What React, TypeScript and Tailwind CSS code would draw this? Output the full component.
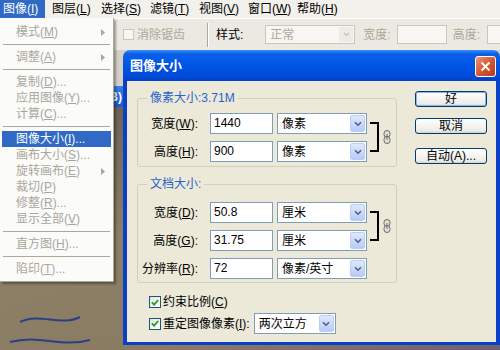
import { ReactNode } from "react";

function U({ c }: { c: string }) {
    return <span className="underline underline-offset-[1px]">{c}</span>
}

const menuBarItems = [
    { t: "图像", k: "I" },
    { t: "图层", k: "L" },
    { t: "选择", k: "S" },
    { t: "滤镜", k: "T" },
    { t: "视图", k: "V" },
    { t: "窗口", k: "W" },
    { t: "帮助", k: "H" },
]

type MenuEntry = { sep: true } | { t: string; k: string; dots?: boolean; sub?: boolean; active?: boolean }

const imageMenu: MenuEntry[] = [
    { t: "模式", k: "M", sub: true },
    { sep: true },
    { t: "调整", k: "A", sub: true },
    { sep: true },
    { t: "复制", k: "D", dots: true },
    { t: "应用图像", k: "Y", dots: true },
    { t: "计算", k: "C", dots: true },
    { sep: true },
    { t: "图像大小", k: "I", dots: true, active: true },
    { t: "画布大小", k: "S", dots: true },
    { t: "旋转画布", k: "E", sub: true },
    { t: "裁切", k: "P" },
    { t: "修整", k: "R", dots: true },
    { t: "显示全部", k: "V" },
    { sep: true },
    { t: "直方图", k: "H", dots: true },
    { sep: true },
    { t: "陷印", k: "T", dots: true },
]

function MenuBar() {
    return (
        <div className="flex h-[18px] gap-[4px] whitespace-nowrap bg-[#f2f1ec]">
            {menuBarItems.map((m, i) => (
                <div
                    key={m.t}
                    className={`flex w-[45px] shrink-0 items-center pl-[3px] leading-[18px] ${i === 0 ? "bg-[#316ac5] text-white" : "text-black"}`}
                >
                    {m.t}(<U c={m.k} />)
                </div>
            ))}
        </div>
    )
}

function Toolbar() {
    return (
        <div className="flex h-[32px] items-center whitespace-nowrap border-t border-white bg-[#ebe9e1] pl-[123px] text-[#aca899]">
            <div className="h-[11px] w-[11px] shrink-0 border border-[#c9c7ba] bg-[#f7f6f2]" />
            <span className="ml-[3px] shrink-0">消除锯齿</span>
            <div className="ml-[22px] h-[24px] w-[2px] shrink-0 border-l border-r border-l-[#aca899] border-r-white" />
            <span className="ml-[7px] shrink-0 text-black">样式:</span>
            <div className="ml-[22px] flex h-[19px] w-[90px] shrink-0 items-center border border-[#c9c7ba] bg-[#f7f6f2] pl-[4px]">
                <span>正常</span>
                <div className="ml-auto mr-[1px] flex h-[15px] w-[14px] items-center justify-center bg-[#ecebe6]">
                    <svg width="7" height="5" viewBox="0 0 7 5"><path d="M1 1l2.5 2.5L6 1" stroke="#c9c7ba" strokeWidth="1.5" fill="none" /></svg>
                </div>
            </div>
            <span className="ml-[8px] shrink-0">宽度:</span>
            <div className="ml-[6px] h-[19px] w-[50px] shrink-0 border border-[#c9c7ba] bg-[#f7f6f2]" />
            <span className="ml-[6px] shrink-0">高度:</span>
            <div className="ml-[7px] h-[19px] w-[50px] shrink-0 border border-[#c9c7ba] bg-[#f7f6f2]" />
        </div>
    )
}

function ImageMenu() {
    return (
        <div className="absolute left-0 top-[18px] w-[114px] whitespace-nowrap border-b border-r border-[#aca899] bg-[#fbfbf9] pb-[4px] pt-[6px] shadow-[2px_2px_2px_rgba(0,0,0,0.35)]">
            {imageMenu.map((m, i) =>
                "sep" in m ? (
                    <div key={i} className="mx-[3px] flex h-[9px] items-center">
                        <div className="w-full border-t border-[#aca899]" />
                    </div>
                ) : (
                    <div
                        key={i}
                        className={`mx-[2px] flex h-[16px] items-center pl-[14px] pr-[6px] leading-[16px] ${m.active ? "bg-[#316ac5] text-white" : "text-[#a9a79c]"}`}
                    >
                        <span>
                            {m.t}(<U c={m.k} />){m.dots ? "..." : ""}
                        </span>
                        {m.sub && (
                            <svg className="ml-auto" width="4" height="7" viewBox="0 0 4 7"><path d="M0 0l4 3.5L0 7z" fill="#a9a79c" /></svg>
                        )}
                    </div>
                )
            )}
        </div>
    )
}

function Field({ value }: { value: string }) {
    return (
        <div className="ml-[12px] h-[21px] w-[63px] border border-[#7f9db9] bg-white pl-[3px] leading-[19px] text-black">
            {value}
        </div>
    )
}

function Select({ value, className = "" }: { value: string; className?: string }) {
    return (
        <div className={`flex h-[21px] items-center border border-[#7f9db9] bg-white pl-[4px] text-black ${className}`}>
            <span>{value}</span>
            <div className="ml-auto mr-[1px] flex h-[17px] w-[15px] items-center justify-center rounded-[2px] border border-[#bccdf4] bg-[linear-gradient(to_bottom,#dfe8fd,#b7cbf6)]">
                <svg width="8" height="6" viewBox="0 0 8 6"><path d="M1 1.2l3 3 3-3" stroke="#4d6185" strokeWidth="1.6" fill="none" /></svg>
            </div>
        </div>
    )
}

function Row({ label, value, unit }: { label: ReactNode; value: string; unit: string }) {
    return (
        <div className="flex h-[21px] items-center">
            <div className="w-[60px] whitespace-nowrap text-right text-black">{label}</div>
            <Field value={value} />
            <Select value={unit} className="ml-[4px] w-[90px]" />
        </div>
    )
}

function Chain() {
    return (
        <svg width="8" height="14" viewBox="0 0 8 14" className="ml-[4px] mt-[17px]">
            <rect x="1" y="0.5" width="6" height="7" rx="3" fill="#e2e1da" stroke="#6b6b66" />
            <rect x="1" y="6.5" width="6" height="7" rx="3" fill="#e2e1da" stroke="#6b6b66" />
            <line x1="4" y1="4" x2="4" y2="10" stroke="#6b6b66" />
        </svg>
    )
}

function Bracket() {
    return <div className="ml-[3px] mt-[9px] h-[30px] w-[9px] border-y-2 border-r-2 border-black" />
}

function Group({ title, children, className = "" }: { title: string; children: ReactNode; className?: string }) {
    return (
        <fieldset className={`min-w-0 rounded-[3px] border border-[#d0d0bf] ${className}`}>
            <legend className="ml-[9px] px-[3px] leading-[14px] text-[#2a62cc]">{title}</legend>
            {children}
        </fieldset>
    )
}

function XpButton({ children, primary, className = "" }: { children: ReactNode; primary?: boolean; className?: string }) {
    return (
        <button
            className={`h-[16px] w-[72px] rounded-[3px] border border-[#003c74] bg-[linear-gradient(to_bottom,#ffffff,#ecebe6_85%,#d6d0c5)] text-[12px] leading-[14px] text-black ${primary ? "shadow-[inset_0_0_0_1px_#8fb3ee]" : ""} ${className}`}
        >
            {children}
        </button>
    )
}

function Check({ children }: { children: ReactNode }) {
    return (
        <div className="flex items-center whitespace-nowrap">
            <div className="flex h-[12px] w-[12px] items-center justify-center border border-[#1c5180] bg-[linear-gradient(135deg,#e6e6e0,#ffffff)]">
                <svg width="8" height="7" viewBox="0 0 8 7"><path d="M0.8 3.4l2.3 2.3L7.2 1" stroke="#21a121" strokeWidth="1.8" fill="none" /></svg>
            </div>
            <span className="ml-[2px] text-black">{children}</span>
        </div>
    )
}

function ImageSizeDialog() {
    return (
        <div className="absolute left-[123px] top-[50px] w-[377px]">
            <div className="flex h-[31px] items-center rounded-t-[7px] bg-[linear-gradient(to_bottom,#3d8ff7_0%,#0b60e9_12%,#0055e5_50%,#004ad8_85%,#0040c2_100%)] pl-[7px] pr-[4px]">
                <span className="text-[13px] font-bold text-white">图像大小</span>
                <div className="ml-auto mt-[2px] flex h-[21px] w-[21px] items-center justify-center rounded-[3px] border border-white bg-[linear-gradient(135deg,#f0927a,#d5532f_55%,#b8391a)]">
                    <svg width="11" height="11" viewBox="0 0 11 11"><path d="M1.5 1.5l8 8M9.5 1.5l-8 8" stroke="white" strokeWidth="2" /></svg>
                </div>
            </div>
            <div className="flex h-[264px] border-x-4 border-b-[3px] border-[#0a3fc8] bg-[#ece9d8] pl-[10px] pt-[10px]">
                <div className="flex w-[260px] flex-col">
                    <Group title="像素大小:3.71M">
                        <div className="flex items-start pb-[4px] pt-[8px]">
                            <div className="flex flex-col gap-[7px]">
                                <Row label={<>宽度(<U c="W" />):</>} value="1440" unit="像素" />
                                <Row label={<>高度(<U c="H" />):</>} value="900" unit="像素" />
                            </div>
                            <Bracket />
                            <Chain />
                        </div>
                    </Group>
                    <Group title="文档大小:" className="mt-[10px]">
                        <div className="flex items-start pb-[3px] pt-[11px]">
                            <div className="flex flex-col gap-[7px]">
                                <Row label={<>宽度(<U c="D" />):</>} value="50.8" unit="厘米" />
                                <Row label={<>高度(<U c="G" />):</>} value="31.75" unit="厘米" />
                                <Row label={<>分辨率(<U c="R" />):</>} value="72" unit="像素/英寸" />
                            </div>
                            <Bracket />
                            <Chain />
                        </div>
                    </Group>
                    <div className="mt-[10px] flex h-[18px] items-center pl-[12px]">
                        <Check>约束比例(<U c="C" />)</Check>
                    </div>
                    <div className="mt-[2px] flex h-[21px] items-center pl-[12px]">
                        <Check>重定图像像素(<U c="I" />):</Check>
                        <Select value="两次立方" className="ml-[4px] w-[82px]" />
                    </div>
                </div>
                <div className="ml-[18px] flex flex-col">
                    <XpButton primary>好</XpButton>
                    <XpButton className="mt-[11px]">取消</XpButton>
                    <XpButton className="mt-[14px]">自动(A)...</XpButton>
                </div>
            </div>
        </div>
    )
}

export default function App() {
    return (
        <div className="relative h-[350px] w-[500px] overflow-hidden bg-[#d4d0c8] font-['Liberation_Sans','Noto_Sans_CJK_SC',sans-serif] text-[12px]">
            <MenuBar />
            <Toolbar />
            {/* document window behind the dialog */}
            <div className="absolute left-0 top-[86px] w-[500px]">
                <div className="flex h-[21px] w-full items-center bg-[linear-gradient(to_bottom,#3a7ee8,#1c56d0)]">
                    <div className="w-[123px] pr-[1px] text-right font-bold text-white">B)</div>
                </div>
                <div className="h-[250px] bg-[linear-gradient(160deg,#5f5a50,#8c7f66_40%,#8a7c62_70%,#6b5f77)]">
                    <svg width="500" height="250" viewBox="0 0 500 250">
                        <path d="M20 215c20 -10 40 5 60 -5M10 235c30 -8 50 6 80 -2" stroke="#2b3f86" strokeWidth="2" fill="none" />
                        <path d="M200 255l15 -10M280 258c10 -6 25 -6 35 0M430 255l20 -8" stroke="#4a3f8a" strokeWidth="3" fill="none" />
                    </svg>
                </div>
            </div>
            <ImageMenu />
            <ImageSizeDialog />
        </div>
    )
}
